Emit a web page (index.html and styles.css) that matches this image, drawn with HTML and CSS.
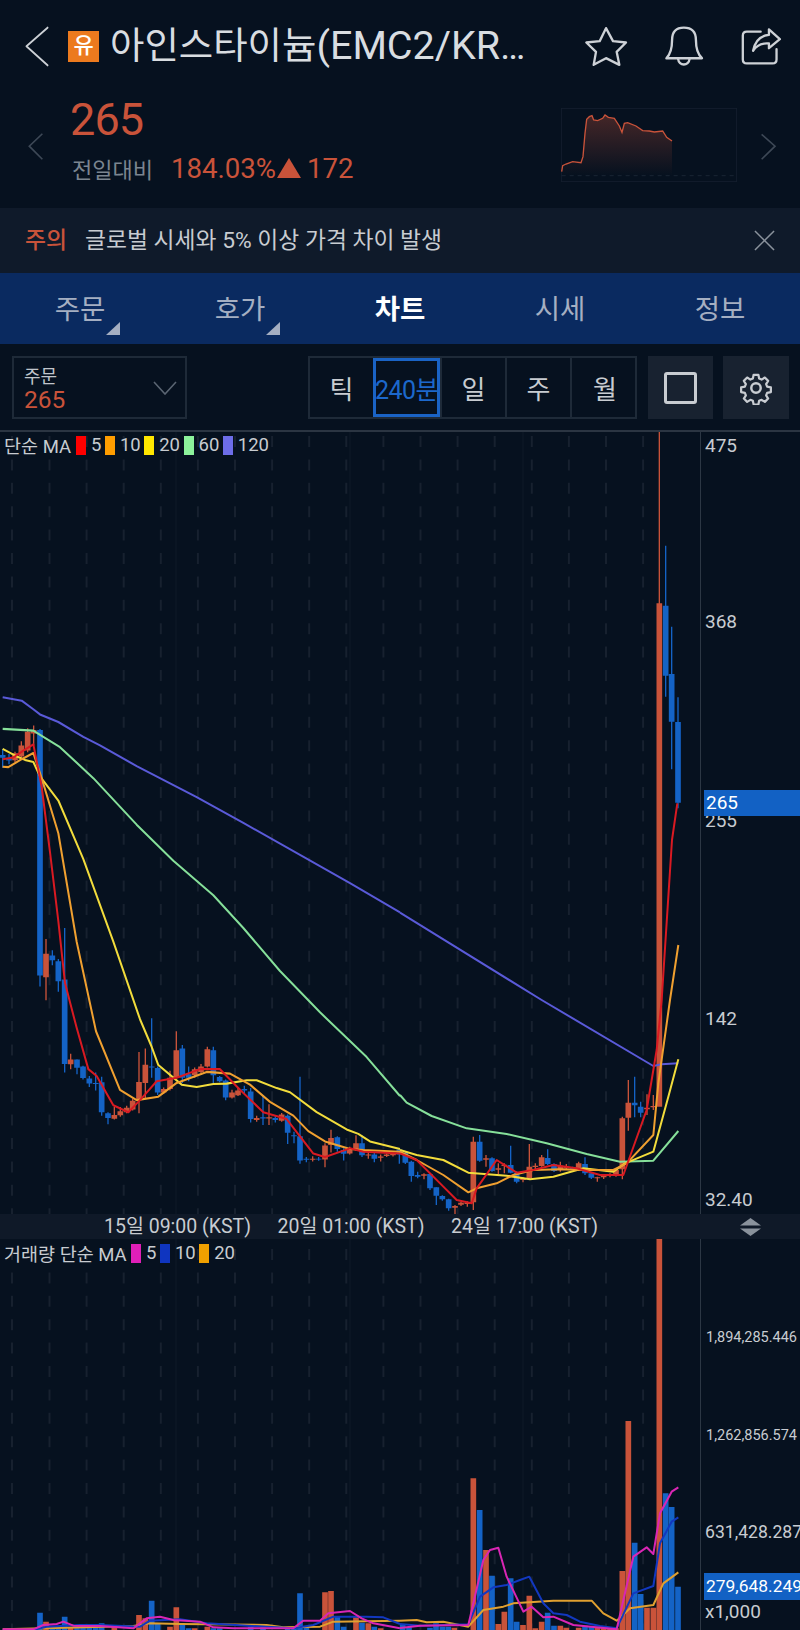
FILE: index.html
```html
<!DOCTYPE html>
<html lang="ko">
<head>
<meta charset="utf-8">
<title>아인스타이늄 차트</title>
<link rel="stylesheet" href="styles.css">
</head>
<body>
<div class="app">
  <header class="topbar">
    <svg class="ico-back" viewBox="70 75 85 125" preserveAspectRatio="none"><path d="M147 83L78 138L147 195"/></svg>
    <span class="badge">유</span>
    <h1 class="title">아인스타이늄<span class="title-latin">(EMC2/KRW)</span></h1>
    <svg class="ico ico-star" viewBox="185 75 138 128"><path d="M254 84L275 123L314 127L286 155L294 194L254 174L217 194L224 155L195 127L235 123Z"/></svg>
    <svg class="ico ico-bell" viewBox="425 75 125 128"><path d="M435 174C450 160 452 140 452 120C452 95 465 83 487 83C510 83 523 95 523 120C523 140 525 160 541 174Z"/><path d="M470 176C472 198 502 198 504 176"/></svg>
    <svg class="ico ico-share" viewBox="658 78 126 118"><path d="M720 92H678Q666 92 666 104V176Q666 188 678 188H756Q768 188 768 176V145"/><path d="M745 85L778 115L745 142V128C725 126 708 133 697 150C703 120 720 104 745 102Z"/></svg>
  </header>

  <section class="quote">
    <svg class="nav-arrow" viewBox="80 395 52 88"><path d="M127 400L87 438L127 478"/></svg>
    <div class="quote-main">
      <div class="price">265</div>
      <div class="change"><span class="change-label">전일대비</span><span class="change-pct">184.03%</span><span class="tri"></span><span class="change-abs">172</span></div>
    </div>
    <svg class="spark" viewBox="120 324 528 222">
      <defs><linearGradient id="sparkfill" x1="0" y1="0" x2="0" y2="1"><stop offset="0" stop-color="#c9533a" stop-opacity=".32"/><stop offset="1" stop-color="#c9533a" stop-opacity="0"/></linearGradient></defs>
      <rect class="spark-box" x="121" y="325" width="526" height="220"/>
      <path class="spark-base" d="M122 527H646"/>
      <path fill="url(#sparkfill)" d="M122 527V515L125 497L135 492L155 485L180 488L186 470L192 400L197 358L205 350L213 347L218 360L230 362L245 355L252 345L262 352L280 355L295 378L303 397L310 370L320 368L345 378L365 392L385 393L400 396L425 393L437 412L453 423V527Z"/>
      <path class="spark-line" d="M122 515L125 497L135 492L155 485L180 488L186 470L192 400L197 358L205 350L213 347L218 360L230 362L245 355L252 345L262 352L280 355L295 378L303 397L310 370L320 368L345 378L365 392L385 393L400 396L425 393L437 412L453 423"/>
    </svg>
    <svg class="nav-arrow nav-next" viewBox="717 395 52 88"><path d="M722 402L763 438L722 478"/></svg>
  </section>

  <section class="notice">
    <span class="notice-tag">주의</span>
    <span class="notice-text">글로벌 시세와 5% 이상 가격 차이 발생</span>
    <svg class="notice-x" viewBox="0 0 22 22"><path d="M1 1L21 21M21 1L1 21"/></svg>
  </section>

  <nav class="tabs">
    <div class="tab tab-more">주문</div>
    <div class="tab tab-more">호가</div>
    <div class="tab tab-on">차트</div>
    <div class="tab">시세</div>
    <div class="tab">정보</div>
  </nav>

  <section class="toolbar">
    <div class="select">
      <div class="select-name">주문</div>
      <div class="select-val">265</div>
      <svg class="select-arrow" viewBox="0 0 24 14"><path d="M1 1L12 13L23 1"/></svg>
    </div>
    <div class="seg">
      <div class="seg-cell">틱</div>
      <div class="seg-cell seg-on">240분</div>
      <div class="seg-cell">일</div>
      <div class="seg-cell">주</div>
      <div class="seg-cell">월</div>
    </div>
    <div class="tool-btn"><span class="square"></span></div>
    <div class="tool-btn tool-gear">
      <svg viewBox="0 0 36 36" class="gear"><path d="M15.2 2.5h5.6l.9 4.4 2.9 1.2 3.8-2.4 3.9 3.9-2.4 3.8 1.2 2.9 4.4.9v5.6l-4.4.9-1.2 2.9 2.4 3.8-3.9 3.9-3.8-2.4-2.9 1.2-.9 4.4h-5.6l-.9-4.4-2.9-1.2-3.8 2.4-3.9-3.9 2.4-3.8-1.2-2.9-4.4-.9v-5.6l4.4-.9 1.2-2.9-2.4-3.8 3.9-3.9 3.8 2.4 2.9-1.2z" transform="translate(1.8 1.8) scale(.9)"/><circle cx="18" cy="18" r="5"/></svg>
    </div>
  </section>

  <section class="panel panel-price">
    <svg class="plot" viewBox="0 432 800 782">
      <path class="grid-solid" d="M176 432V1214M350 432V1214M523 432V1214"/>
      <path class="grid-dash" d="M12 436V1214M49.5 436V1214M86.6 436V1214M123.7 436V1214M160.8 436V1214M197.9 436V1214M235 436V1214M272.1 436V1214M309.2 436V1214M346.3 436V1214M383.4 436V1214M420.5 436V1214M457.6 436V1214M494.7 436V1214M531.8 436V1214M568.9 436V1214M606 436V1214M643.1 436V1214"/>
      <path class="axis" d="M700.5 432V1214"/>

      <g transform="translate(0 680) scale(.33333 .34438)">
        <path class="rw" d="M45 208V238M64 178V226M83 140V210M101 132V190M138 752V930M212 1085V1130M343 1240V1276M361 1240V1268M380 1236V1258M398 1215V1250M417 1080V1258M436 1070V1215M491 1183V1202M510 1135V1192M529 1020V1155M584 1125V1155M603 1115V1142M622 1065V1125M696 1190V1215M714 1185V1208M770 1265V1283M807 1232V1292M845 1257V1283M938 1383V1398M975 1345V1415M993 1306V1372M1049 1355V1378M1068 1322V1368M1105 1372V1390M1142 1378V1398M1160 1375V1385M1179 1372V1384"/>
        <path class="rb" d="M45 213V233M64 190V222M83 150V205M101 145V155M138 795V863M212 1102V1116M343 1263V1274M361 1252V1264M380 1242V1255M398 1222V1247M417 1167V1218M436 1117V1170M491 1188V1198M510 1155V1188M529 1075V1155M584 1130V1148M603 1122V1138M622 1072V1122M696 1198V1212M714 1192V1206M770 1272V1278M807 1270V1273M845 1262V1280M938 1390V1393M975 1352V1392M993 1330V1350M1049 1362V1375M1068 1345V1365M1105 1378V1381M1142 1384V1387M1160 1378V1382M1179 1376V1380"/>
        <path class="bw" d="M8 200V255M27 215V245M120 142V890M157 785V828M175 810V905M194 720V1140M231 1102V1145M249 1120V1160M268 1150V1182M287 1140V1192M305 1152V1265M324 1255V1290M455 982V1155M473 1122V1205M547 1060V1170M566 1122V1165M640 1065V1172M659 1150V1168M677 1160V1220M733 1178V1200M752 1185V1285M789 1205V1292M826 1265V1285M863 1262V1347M882 1312V1345M900 1152V1405M919 1385V1400M956 1385V1396M1012 1325V1370M1031 1360V1395M1086 1322V1385M1123 1372V1400M1198 1360V1405"/>
        <path class="bb" d="M8 218V226M27 226V234M120 145V858M157 800V814M175 817V875M194 870V1115M231 1102V1126M249 1122V1156M268 1157V1172M287 1170V1173M305 1168V1255M324 1258V1272M455 1122V1125M473 1127V1198M547 1070V1155M566 1145V1155M640 1075V1148M659 1153V1165M677 1163V1212M733 1188V1192M752 1195V1275M789 1270V1273M826 1272V1278M863 1265V1315M882 1322V1325M900 1325V1395M919 1390V1393M956 1390V1392M1012 1328V1362M1031 1365V1376M1086 1345V1380M1123 1378V1390M1198 1363V1378"/>
      </g>
      <g transform="translate(290 1090) scale(.33333)">
        <path class="rw" d="M402 250V268M495 345V372M513 336V348M532 334V350"/>
        <path class="rb" d="M402 253V257M495 348V353M513 338V344M532 338V342"/>
        <path class="bw" d="M346 185V222M364 212V275M383 245V265M420 250V300M439 292V345M457 316V332M476 326V362"/>
        <path class="bb" d="M346 188V218M364 215V258M383 255V260M420 252V295M439 292V317M457 318V328M476 328V355"/>
      </g>
      <g transform="translate(400 1000) scale(.33333)">
        <path class="rw" d="M220 410V630M258 465V500M295 490V522M313 490V520M369 532V547M388 432V537M406 490V510M425 465V500M481 485V515M499 492V510M536 485V512M592 530V545M611 525V537M630 520V532M648 505V530M667 350V538M685 240V392M741 283V345M760 285V330"/>
        <path class="rb" d="M220 425V607M258 475V479M295 505V509M313 494V498M369 535V540M388 500V535M406 497V501M425 472V498M481 497V510M499 500V505M536 490V510M592 532V535M611 528V532M630 524V528M648 510V525M667 355V508M685 308V353M741 323V328M760 318V322"/>
        <path class="bw" d="M239 405V485M276 472V515M332 437V520M350 514V550M443 448V495M462 490V516M518 500V510M555 472V525M574 518V537M704 230V352M722 305V352"/>
        <path class="bb" d="M239 425V482M276 475V513M332 495V518M350 518V545M443 474V492M462 492V513M518 503V507M555 492V520M574 520V533M704 308V316M722 320V338"/>
      </g>
      <g transform="translate(600 420) scale(.33333)">
        <path class="rw" d="M178 36V560"/>
        <path class="rb" d="M178 550V2060"/>
        <path class="bw" d="M197 377V830M215 620V1048M234 832V1165"/>
        <path class="bb" d="M197 557V767M215 762V905M234 906V1148"/>
      </g>

      <g transform="translate(0 680) scale(.33333 .34438)">
        <path class="ma120" d="M8 50L65 60L100 85L120 100L175 122L250 165L300 190L410 250L590 340L730 415L1050 590L1200 675"/>
        <path class="ma60" d="M8 142L100 147L130 165L180 195L280 285L410 420L520 525L640 625L730 720L840 845L960 965L1100 1095L1200 1208"/>
        <path class="ma20" d="M8 200L50 222L75 232L100 238L120 280L175 350L250 520L340 760L420 985L455 1065L475 1118L545 1175L590 1182L640 1173L680 1172L740 1162L770 1162L830 1185L870 1197L950 1255L1040 1305L1075 1318L1110 1340L1200 1362"/>
        <path class="ma10" d="M8 252L25 253L65 230L100 212L125 285L175 445L230 760L288 1020L360 1190L410 1220L475 1210L530 1170L620 1138L690 1143L750 1175L810 1225L880 1265L925 1310L975 1340L1050 1362L1090 1365L1200 1370"/>
        <path class="ma5" d="M8 230L40 225L70 205L100 187L125 310L150 500L175 700L195 880L230 1010L265 1130L290 1150L340 1235L385 1255L420 1220L470 1165L530 1155L600 1130L660 1130L720 1190L790 1255L860 1275L900 1325L940 1375L975 1385L1050 1360L1090 1370L1200 1375"/>
      </g>
      <g transform="translate(400 1000) scale(.33333)">
        <path class="ma120" d="M0 -262L425 0L760 198L785 193L835 190"/>
        <path class="ma60" d="M0 285L20 308L95 348L200 385L320 402L440 430L560 462L660 485L760 482L835 393"/>
        <path class="ma20" d="M0 450L50 465L130 480L205 518L320 527L390 538L460 530L550 505L640 515L675 490L760 455L805 290L835 178"/>
        <path class="ma10" d="M0 455L50 480L130 525L205 577L230 565L290 550L340 525L400 510L480 508L560 510L640 510L680 490L760 405L775 250L810 0L835 -165"/>
        <path class="ma5" d="M0 460L50 480L130 560L170 600L215 610L230 565L290 480L350 518L400 510L460 495L530 505L600 525L670 525L740 330L770 150L785 0L816 -480L832 -590"/>
      </g>
    </svg>
    <div class="legend">
      <span class="lg-name">단순 MA</span>
      <i class="sw sw-red"></i><span>5</span>
      <i class="sw sw-orange"></i><span>10</span>
      <i class="sw sw-yellow"></i><span>20</span>
      <i class="sw sw-green"></i><span>60</span>
      <i class="sw sw-purple"></i><span>120</span>
    </div>
    <span class="ylab y-475">475</span>
    <span class="ylab y-368">368</span>
    <span class="ylab y-255">255</span>
    <span class="ylab y-142">142</span>
    <span class="ylab y-32">32.40</span>
    <span class="tag tag-price">265</span>
  </section>

  <div class="timebar">
    <span class="time">15일 09:00 (KST)</span>
    <span class="time">20일 01:00 (KST)</span>
    <span class="time">24일 17:00 (KST)</span>
    <svg class="resize" viewBox="0 0 21 18"><path d="M10.5 0L21 7.5H0Z"/><path d="M0 10.5H21L10.5 18Z"/></svg>
  </div>

  <section class="panel panel-vol">
    <svg class="plot" viewBox="0 1239 800 391">
      <path class="grid-solid" d="M176 1239V1630M350 1239V1630M523 1239V1630"/>
      <path class="grid-dash" d="M12 1249V1630M49.5 1249V1630M86.6 1249V1630M123.7 1249V1630M160.8 1249V1630M197.9 1249V1630M235 1249V1630M272.1 1249V1630M309.2 1249V1630M346.3 1249V1630M383.4 1249V1630M420.5 1249V1630M457.6 1249V1630M494.7 1249V1630M531.8 1249V1630M568.9 1249V1630M606 1249V1630M643.1 1249V1630"/>
      <path class="axis" d="M700.5 1239V1630"/>
      <g transform="translate(0 1200) scale(.33333)">
        <path class="rb" d="M45 1288V1300M138 1265V1300M212 1280V1300M343 1280V1300M417 1245V1300M436 1255V1300M510 1280V1300M529 1222V1300M584 1285V1300M622 1280V1300M975 1177V1300M993 1173V1300M1068 1252V1300M1105 1270V1300M1142 1285V1300"/>
        <path class="bb" d="M120 1238V1300M157 1280V1300M175 1280V1300M194 1250V1300M231 1278V1300M249 1278V1300M268 1278V1300M287 1278V1300M305 1270V1300M455 1202V1300M473 1270V1300M547 1270V1300M566 1285V1300M640 1285V1300M659 1285V1300M752 1280V1300M789 1275V1300M863 1285V1300M882 1280V1300M900 1180V1300M919 1280V1300M1012 1250V1300M1031 1280V1300M1086 1268V1300M1123 1280V1300"/>
        <path class="vma20" d="M8 1288L400 1278L450 1270L540 1272L800 1275L850 1282L960 1280L1000 1265L1200 1262"/>
        <path class="vma10" d="M8 1290L100 1290L140 1280L240 1275L300 1275L420 1280L450 1262L540 1258L620 1270L880 1285L940 1275L1000 1250L1100 1250L1150 1252L1200 1272"/>
        <path class="vma5" d="M8 1288L100 1288L130 1275L170 1272L190 1265L220 1277L300 1278L400 1285L440 1255L480 1250L520 1260L600 1265L640 1282L700 1285L880 1285L910 1262L960 1262L985 1240L1050 1233L1085 1255L1120 1270L1200 1285"/>
      </g>
      <g transform="translate(400 1380) scale(.33333)">
        <path class="rb" d="M163 743V760M220 295V760M258 510V760M295 732V760M313 695V760M369 735V760M388 647V760M406 745V760M425 725V760M481 737V760M499 743V760M536 743V760M592 743V760M611 743V760M630 745V760M648 745V760M667 573V760M685 123V760M741 683V760M760 683V760M778 -423V760"/>
        <path class="bb" d="M8 735V760M27 742V760M90 743V760M108 730V760M127 740V760M145 740V760M239 390V760M276 587V760M332 595V760M350 725V760M443 698V760M462 737V760M555 737V760M574 740V760M704 488V760M722 642V760M797 340V760M815 381V760M834 620V760"/>
        <path class="vma20" d="M0 722L50 720L80 727L130 725L205 740L250 690L310 680L340 670L460 662L575 662L610 700L650 722L690 685L760 675L790 610L835 577"/>
        <path class="vma10" d="M0 732L60 737L205 733L240 650L280 622L320 615L360 600L388 590L430 670L460 700L500 705L540 725L600 738L650 745L700 640L760 618L780 490L815 425L835 412"/>
        <path class="vma5" d="M0 744L60 737L205 735L250 540L270 510L295 503L320 590L370 695L395 680L430 712L460 710L520 735L650 748L700 530L740 502L760 522L780 400L815 335L835 322"/>
      </g>
    </svg>
    <div class="legend legend-vol">
      <span class="lg-name">거래량 단순 MA</span>
      <i class="sw sw-magenta"></i><span>5</span>
      <i class="sw sw-blue"></i><span>10</span>
      <i class="sw sw-amber"></i><span>20</span>
    </div>
    <span class="ylab ylab-s y-189">1,894,285.446</span>
    <span class="ylab ylab-s y-126">1,262,856.574</span>
    <span class="ylab ylab-m y-631">631,428.287</span>
    <span class="tag tag-vol">279,648.249</span>
    <span class="ylab y-x">x1,000</span>
  </section>
</div>
</body>
</html>
```
FILE: styles.css
```css
* { box-sizing: border-box; margin: 0; padding: 0; }
html, body { background: #06111f; }
body { font-family: Roboto, "Noto Sans CJK KR", sans-serif; color: #c8ccd1; overflow: hidden; }
.app { width: 800px; height: 1630px; overflow: hidden; }

/* top bar */
.topbar { display: flex; align-items: center; height: 92px; padding-left: 24px; }
.topbar svg { fill: none; stroke: #cdd1d6; stroke-linejoin: round; stroke-linecap: round; flex: none; }
.ico-back { width: 26px; height: 42px; }
.ico-back path { stroke-width: 6; }
.badge { flex: none; width: 31px; height: 31px; margin-left: 18px; background: #ec7a1e; color: #fff; font-size: 22px; line-height: 29px; font-weight: 500; text-align: center; }
.title { flex: none; width: 416px; margin-left: 11px; font-size: 37.4px; line-height: 46px; font-weight: 400; color: #d9dde1; white-space: nowrap; overflow: hidden; text-overflow: ellipsis; }
.title-latin { font-size: 39.5px; }
.ico path { stroke-width: 7; }
.ico-star { width: 46px; height: 43px; margin-left: 57px; }
.ico-bell { width: 42px; height: 43px; margin-left: 34px; }
.ico-share { width: 42px; height: 39px; margin-left: 35px; }

/* quote row */
.quote { display: flex; align-items: flex-start; height: 116px; padding-left: 27px; }
.nav-arrow { flex: none; width: 17px; height: 29px; margin-top: 40px; fill: none; stroke: #3d4856; stroke-width: 5; }
.quote-main { flex: none; width: 489px; margin-left: 28px; }
.price { font-size: 45px; line-height: 46px; margin: 5px 0 0 -2px; letter-spacing: -.9px; color: #c9533a; }
.change { display: flex; align-items: center; height: 36px; margin-top: 7px; color: #c9533a; font-size: 27.6px; }
.change-label { color: #7b8590; font-size: 22px; width: 99px; }
.tri { width: 0; height: 0; margin: 0 6px 0 1px; border-left: 12px solid transparent; border-right: 12px solid transparent; border-bottom: 20px solid #c9533a; }
.spark { flex: none; width: 176px; height: 74px; margin-top: 16px; }
.spark-box { fill: none; stroke: #141f2e; stroke-width: 3; }
.spark-base { stroke: #1a2534; stroke-width: 3; stroke-dasharray: 12 12; }
.spark-line { fill: none; stroke: #c9533a; stroke-width: 4; }
.nav-next { margin-left: 23px; }

/* notice */
.notice { display: flex; align-items: center; height: 65px; padding: 0 0 5px 25px; background: #0f1a2a; font-size: 22.8px; }
.notice-tag { width: 60px; color: #c9533a; font-weight: 500; }
.notice-text { flex: none; width: 669px; color: #c8ccd1; }
.notice-x { width: 21px; height: 21px; margin-top: 5px; fill: none; stroke: #8a929c; stroke-width: 1.6; }

/* tabs */
.tabs { display: flex; height: 71px; background: #0a2a60; }
.tab { position: relative; flex: 1; text-align: center; font-size: 27.5px; line-height: 73px; color: #a5afc2; }
.tab-on { color: #fff; font-weight: 700; }
.tab-more::after { content: ""; position: absolute; left: 106px; bottom: 9px; width: 0; height: 0; border-left: 14px solid transparent; border-bottom: 13px solid #a5afc2; }

/* toolbar */
.toolbar { display: flex; height: 86px; padding: 12px 0 0 12px; }
.select { position: relative; flex: none; width: 175px; height: 63px; padding: 8px 0 0 10px; border: 2px solid #1e2a38; }
.select-name { font-size: 18px; line-height: 21px; color: #c0c5cb; }
.select-val { font-size: 24.5px; line-height: 25px; color: #c9533a; }
.select-arrow { position: absolute; left: 139px; top: 23px; width: 24px; height: 14px; fill: none; stroke: #5a6572; stroke-width: 1.6; }
.seg { display: grid; flex: none; grid-template-columns: 63px 67px 65px 65px 65px; width: 329px; height: 63px; margin-left: 121px; border: 2px solid #1e2a38; }
.seg-cell { display: flex; align-items: center; justify-content: center; overflow: visible; white-space: nowrap; font-size: 26px; color: #c8ccd1; border-left: 2px solid #1e2a38; }
.seg-cell:first-child { border-left: 0; }
.seg-cell:last-child { padding-left: 3px; }
.seg-on { position: relative; color: #1c68cc; font-size: 25px; letter-spacing: -.6px; outline: 3px solid #1a63c5; outline-offset: -3px; border-left: 0; }
.tool-btn { display: flex; align-items: center; justify-content: center; flex: none; width: 65px; height: 63px; margin-left: 11px; background: #182230; }
.tool-gear { width: 66px; margin-left: 10px; }
.square { width: 33px; height: 32px; border: 3px solid #c8ccd1; border-radius: 3px; }
.gear { width: 34px; height: 34px; fill: none; stroke: #c8ccd1; stroke-width: 2.6; stroke-linejoin: round; }

/* chart panels */
.panel { position: relative; }
.panel-price { height: 784px; border-top: 2px solid #2b3542; }
.panel-vol { height: 391px; }
.plot { position: absolute; left: 0; top: 0; width: 800px; height: 100%; display: block; }
.panel-price .plot { height: 782px; }
.grid-solid { stroke: #0f1a29; stroke-width: 1; fill: none; }
.grid-dash { stroke: #17212f; stroke-width: 2; fill: none; stroke-dasharray: 11 12.4; }
.axis { stroke: #2c3744; stroke-width: 1; fill: none; }
.rb, .rw, .bb, .bw { fill: none; }
.rb { stroke: #c9533a; stroke-width: 17; }
.rw { stroke: #c9533a; stroke-width: 4; }
.bb { stroke: #1463c6; stroke-width: 17; }
.bw { stroke: #1463c6; stroke-width: 4; }
.ma5, .ma10, .ma20, .ma60, .ma120, .vma5, .vma10, .vma20 { fill: none; stroke-width: 6; stroke-linejoin: round; }
.ma5 { stroke: #d91a22; }
.ma10 { stroke: #f0a030; }
.ma20 { stroke: #f2dc3c; }
.ma60 { stroke: #86e09a; }
.ma120 { stroke: #5a5ad8; }
.vma5 { stroke: #d926b4; }
.vma10 { stroke: #1238c0; }
.vma20 { stroke: #e0a030; }

.legend { position: relative; display: flex; align-items: center; height: 26px; padding-left: 4px; font-size: 18.5px; color: #c8ccd1; }
.legend span { margin-right: 3.5px; }
.legend span.lg-name { flex: none; width: 72px; margin-right: 0; white-space: nowrap; }
.legend-vol span.lg-name { width: 127px; }
.sw { flex: none; width: 10px; height: 19px; margin-right: 5px; }
.sw-red { background: #f00; }
.sw-orange { background: #ff9d00; }
.sw-yellow { background: #ffe600; }
.sw-green { background: #8cf29b; }
.sw-purple { background: #6d6de8; }
.sw-magenta { background: #e01fb8; }
.sw-blue { background: #0f35c0; }
.sw-amber { background: #f0a000; }
.legend-vol { height: 28px; }

.ylab { position: absolute; left: 705px; font-size: 19px; line-height: 22px; color: #c8ccd1; white-space: nowrap; }
.ylab-s { left: 706px; font-size: 14.5px; }
.ylab-m { font-size: 17.6px; }
.y-475 { top: 3px; }
.y-368 { top: 179px; }
.y-255 { top: 378px; }
.y-142 { top: 576px; }
.y-32 { top: 757px; }
.y-189 { top: 88px; }
.y-126 { top: 186px; }
.y-631 { top: 282px; }
.y-x { top: 362px; }
.tag { position: absolute; left: 704px; width: 96px; padding-left: 2px; background: #1261c4; color: #fff; font-size: 19px; white-space: nowrap; overflow: hidden; }
.tag-price { top: 358px; height: 26px; line-height: 26px; }
.tag-vol { top: 334px; height: 27px; line-height: 27px; font-size: 17.4px; }

/* time axis */
.timebar { position: relative; display: flex; gap: 29.5px; height: 25px; padding-left: 104px; background: #0f1928; }
.time { flex: none; width: 144px; text-align: center; font-size: 19.5px; line-height: 25px; color: #c8ccd1; white-space: nowrap; }
.resize { position: absolute; left: 740px; top: 4px; width: 21px; height: 18px; fill: #8a929c; }
```
